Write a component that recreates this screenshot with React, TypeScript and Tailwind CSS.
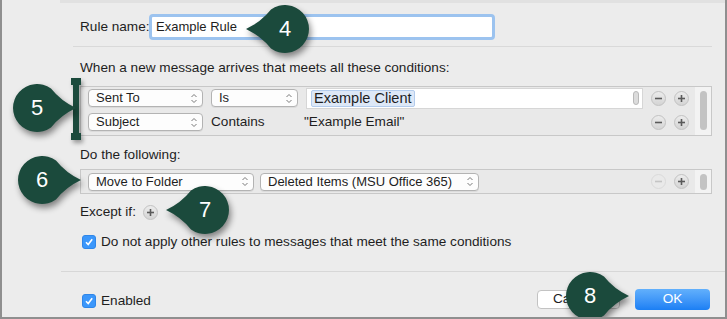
import React from "react";

const font = "font-['Liberation_Sans',Arial,sans-serif]";

const Chevrons = () => (
  <svg width="8" height="11" viewBox="0 0 8 11" className="shrink-0">
    <path d="M1.5 4 L4 1.5 L6.5 4" fill="none" stroke="#7a7a7a" strokeWidth="1" />
    <path d="M1.5 7 L4 9.5 L6.5 7" fill="none" stroke="#7a7a7a" strokeWidth="1" />
  </svg>
);

const Popup = ({ label, w }: { label: string; w: string }) => (
  <div
    className={`${w} h-[18px] rounded-[4px] border border-[#b3b3b3] bg-[#fdfdfd] shadow-[0_1px_0_rgba(0,0,0,0.06)] flex items-center justify-between pl-[7px] pr-[4px] text-[13px] text-[#1e1e1e] whitespace-nowrap`}
  >
    <span>{label}</span>
    <Chevrons />
  </div>
);

const RoundBtn = ({ plus, disabled }: { plus?: boolean; disabled?: boolean }) => (
  <div
    className={`w-[15px] h-[15px] rounded-full border flex items-center justify-center ${
      disabled
        ? "border-[#dadada] bg-[#e9e9e9]"
        : "border-[#c2c2c2] bg-gradient-to-b from-[#ececec] to-[#d4d4d4]"
    }`}
  >
    <svg width="9" height="9" viewBox="0 0 9 9">
      <path d="M1 4.5 H8" stroke={disabled ? "#c4c4c4" : "#5a5a5a"} strokeWidth="1.6" />
      {plus && <path d="M4.5 1 V8" stroke="#5a5a5a" strokeWidth="1.6" />}
    </svg>
  </div>
);

const Check = () => (
  <div className="w-[14px] h-[14px] rounded-[3px] bg-[#3b97fb] border border-[#2f86e8] flex items-center justify-center shrink-0">
    <svg width="10" height="10" viewBox="0 0 10 10">
      <path d="M2 5.3 L4.2 7.6 L8.2 2.2" fill="none" stroke="white" strokeWidth="1.6" />
    </svg>
  </div>
);

// teardrop marker, cx/cy = circle centre, dir = which way the tip points
const Callout = ({ cx, cy, n, dir }: { cx: number; cy: number; n: string; dir: "left" | "right" }) => (
  <div className="absolute w-[80px] h-[60px]" style={{ left: cx - 40, top: cy - 30 }}>
    <svg
      width="80"
      height="60"
      viewBox="-40 -30 80 60"
      className="absolute inset-0 drop-shadow-[2px_4px_3px_rgba(0,0,0,0.45)]"
    >
      <path
        transform={dir === "left" ? "scale(-1,1)" : undefined}
        d="M39 0 Q24 -7 14 -19.5 A24 24 0 1 0 14 19.5 Q24 7 39 0 Z"
        fill="#1b4a3c"
      />
    </svg>
    <div className="absolute left-[20px] top-[10px] w-[40px] h-[40px] flex items-center justify-center text-white text-[22px] leading-none">
      {n}
    </div>
  </div>
);

const App = () => {
  return (
    <div
      className={`${font} relative w-[727px] h-[319px] overflow-hidden bg-[#ececec] border-l-2 border-r-2 border-b-2 border-[#8f8f8f] text-[13.6px] leading-[16px] text-[#1e1e1e]`}
    >
      <div className="h-[3px] ml-[58px] bg-[#e1e1e1]" />

      {/* rule name */}
      <div className="flex items-center mt-[11px] pl-[78px]">
        <span className="w-[69px] shrink-0 whitespace-nowrap">Rule name:</span>
        <div className="w-[346px] h-[26px] shrink-0 rounded-[4px] border-[3px] border-[#9cc3ef] bg-white flex items-center pl-[4px] text-[13px]">
          Example Rule
        </div>
      </div>

      <div className="h-px mt-[6px] ml-[71px] mr-[13px] bg-[#d9d9d9]" />

      {/* conditions */}
      <div className="mt-[13px] pl-[78px] h-[16px] whitespace-nowrap">
        When a new message arrives that meets all these conditions:
      </div>
      <div className="mt-[10px] ml-[78px] w-[632px] h-[50px] border border-[#c8c8c8] bg-[#e9e9e9] flex">
        <div className="flex-1 flex flex-col pl-[7px]">
          <div className="h-[22px] flex items-center">
            <Popup label="Sent To" w="w-[115px]" />
            <div className="ml-[8px]">
              <Popup label="Is" w="w-[87px]" />
            </div>
            <div className="ml-[8px] w-[337px] h-[21px] bg-white border border-[#d6d6d6] flex items-center justify-between pl-[4px] pr-[3px]">
              <span className="h-[17px] px-[2px] bg-[#dde8f7] border border-[#b3cced] rounded-[2px] flex items-center text-[14.5px] leading-none">
                Example Client
              </span>
              <div className="w-[6px] h-[14px] rounded-full border border-[#b9b9b9] bg-[#dcdcdc]" />
            </div>
            <div className="ml-[8px] flex gap-[8px]">
              <RoundBtn />
              <RoundBtn plus />
            </div>
          </div>
          <div className="h-[26px] flex items-center whitespace-nowrap">
            <Popup label="Subject" w="w-[115px]" />
            <span className="ml-[8px] w-[93px]">Contains</span>
            <span>"Example Email"</span>
            <div className="ml-auto mr-[6px] flex gap-[8px]">
              <RoundBtn />
              <RoundBtn plus />
            </div>
          </div>
        </div>
        <div className="w-[16px] bg-[#f3f3f3] flex justify-center pt-[4px]">
          <div className="w-[7px] h-[39px] rounded-full bg-[#c3c3c3]" />
        </div>
      </div>

      {/* actions */}
      <div className="mt-[11px] pl-[78px] h-[16px]">Do the following:</div>
      <div className="mt-[6px] ml-[78px] w-[632px] h-[25px] border border-[#c8c8c8] bg-[#e9e9e9] flex">
        <div className="flex-1 flex items-center pl-[7px]">
          <Popup label="Move to Folder" w="w-[166px]" />
          <div className="ml-[6px]">
            <Popup label="Deleted Items (MSU Office 365)" w="w-[219px]" />
          </div>
          <div className="ml-auto mr-[6px] flex gap-[8px]">
            <RoundBtn disabled />
            <RoundBtn plus />
          </div>
        </div>
        <div className="w-[16px] bg-[#f3f3f3] flex justify-center pt-[4px]">
          <div className="w-[7px] h-[16px] rounded-full bg-[#c3c3c3]" />
        </div>
      </div>

      <div className="mt-[10px] pl-[78px] h-[16px] flex items-center">
        <span>Except if:</span>
        <div className="ml-[7px]">
          <RoundBtn plus />
        </div>
      </div>

      <div className="mt-[14px] pl-[80px] h-[16px] flex items-center gap-[5px] whitespace-nowrap">
        <Check />
        <span>Do not apply other rules to messages that meet the same conditions</span>
      </div>

      <div className="h-px mt-[21px] ml-[59px] bg-[#d7d7d7]" />

      {/* footer */}
      <div className="mt-[16px] h-[22px] flex items-center pl-[80px] pr-[15px]">
        <div className="flex items-center gap-[5px] mt-[3px]">
          <Check />
          <span>Enabled</span>
        </div>
        <div className="ml-auto w-[83px] h-[19px] rounded-[4px] border border-[#c3c3c3] bg-white flex items-center pl-[15px]">
          Ca
        </div>
        <div className="ml-[15px] w-[75px] h-[21px] rounded-[4px] bg-gradient-to-b from-[#62b0fc] to-[#1a7ff4] text-white flex items-center justify-center">
          OK
        </div>
      </div>

      {/* bracket for 5 */}
      <svg width="12" height="62" viewBox="0 0 12 62" className="absolute left-[68px] top-[78px] drop-shadow-[2px_3px_2px_rgba(0,0,0,0.35)]">
        <rect x="1" y="0" width="10" height="7" fill="#1b4a3c" />
        <rect x="3" y="4" width="6" height="54" fill="#1b4a3c" />
        <rect x="1" y="55" width="10" height="7" fill="#1b4a3c" />
      </svg>

      <Callout cx={283} cy={29} n="4" dir="left" />
      <Callout cx={35} cy={108} n="5" dir="right" />
      <Callout cx={40} cy={180} n="6" dir="right" />
      <Callout cx={203} cy={210} n="7" dir="left" />
      <Callout cx={588} cy={296} n="8" dir="right" />
    </div>
  );
};

export default App;
